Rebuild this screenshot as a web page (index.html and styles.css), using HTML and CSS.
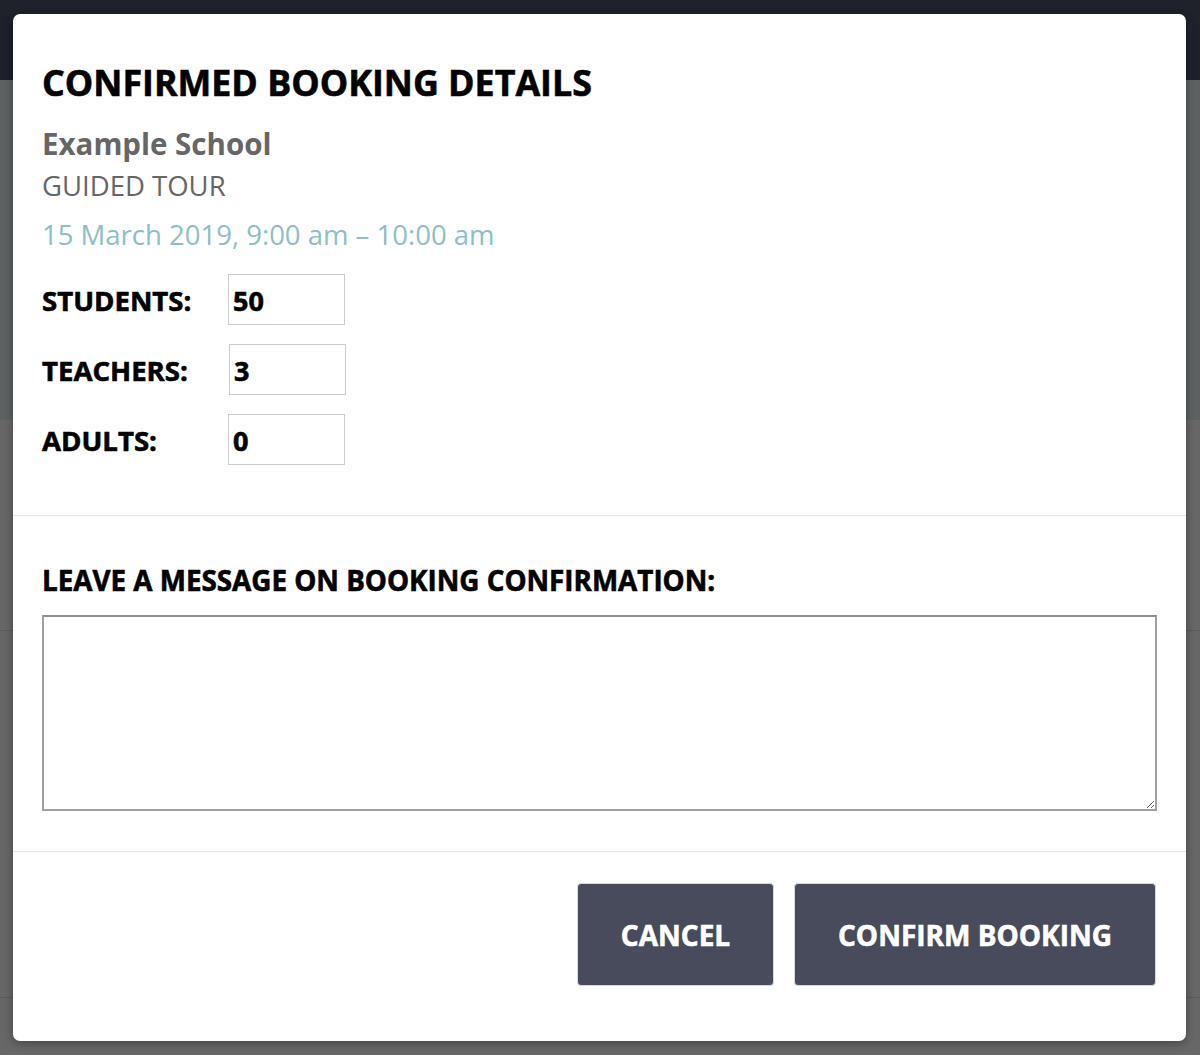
FILE: index.html
```html
<!DOCTYPE html>
<html>
<head>
  <link rel="stylesheet" href="styles.css">
  <title>Confirmed Booking Details</title>
</head>
<body>
  <div class="page">
    <div class="topbar"></div>
    <div class="band band-one"></div>
    <div class="band band-two"></div>
    <div class="band band-three"></div>
    <div class="band band-four"></div>
  </div>

  <div class="modal">
    <div class="modal-body">
      <h2 class="modal-title">Confirmed Booking Details</h2>
      <div class="school">Example School</div>
      <div class="tour">Guided Tour</div>
      <div class="when">15 March 2019, 9:00 am – 10:00 am</div>

      <div class="counts">
        <label for="students">Students:</label>
        <input type="text" id="students" value="50">
        <label for="teachers">Teachers:</label>
        <input type="text" id="teachers" value="3" class="nudge">
        <label for="adults">Adults:</label>
        <input type="text" id="adults" value="0">
      </div>
    </div>

    <div class="modal-message">
      <label for="message" class="message-label">Leave a message on booking confirmation:</label>
      <textarea id="message"></textarea>
    </div>

    <div class="modal-footer">
      <button type="button" class="btn btn-cancel">Cancel</button>
      <button type="button" class="btn btn-confirm">Confirm Booking</button>
    </div>
  </div>
</body>
</html>
```

FILE: styles.css
```css
:root{
--dark: #1f222b;
--overlay1: #5e6163;
--overlay2: #676767;
--line: #e6e6e6;
--btn: #474b5c;
--muted: #666666;
--teal: #8cc0c7;
}

body {
	margin: 0;
	font-family: "Open Sans", sans-serif;
	background-color: var(--overlay2);
	height: 1055px;
	overflow: hidden;
}

.page {
	display: flex;
	flex-direction: column;
}

.topbar {
	height: 80px;
	background-color: var(--dark);
}

.band-one {
	height: 340px;
	background-color: var(--overlay1);
}

.band-two {
	height: 210px;
	border-bottom: 1px solid #5a5c5c;
}

.band-three {
	height: 366px;
	border-bottom: 1px solid #5a5c5c;
}

.modal {
	position: absolute;
	top: 14px;
	left: 13px;
	width: 1173px;
	height: 1027px;
	background: white;
	border-radius: 7px;
	box-shadow: 0 2px 10px rgba(0,0,0,0.35);
	display: flex;
	flex-direction: column;
}

/* heavier look, the installed Open Sans stops at bold */
.modal-title,
.counts label,
.counts input,
.message-label,
.btn {
	font-weight: 700;
	-webkit-text-stroke: 0.6px currentColor;
}

.modal-body {
	padding: 44px 29px 50px 29px;
	border-bottom: 1px solid var(--line);
}

.modal-title {
	margin: 0;
	font-size: 35.8px;
	text-transform: uppercase;
	color: black;
	line-height: 48px;
}

.school {
	margin-top: 18px;
	font-size: 29.5px;
	font-weight: 700;
	color: var(--muted);
	line-height: 40px;
}

.tour {
	font-size: 27.5px;
	color: var(--muted);
	text-transform: uppercase;
	line-height: 40px;
	margin-top: 2px;
}

.when {
	font-size: 27.5px;
	color: var(--teal);
	line-height: 40px;
	margin-top: 9px;
}

.counts {
	margin-top: 19px;
	display: grid;
	grid-template-columns: 186px 117px;
	row-gap: 19px;
	align-items: center;
}

.counts label {
	font-size: 27.6px;
	text-transform: uppercase;
	color: black;
}

.counts input {
	box-sizing: border-box;
	width: 117px;
	height: 51px;
	border: 1px solid #cccccc;
	padding: 2px 4px 0 4px;
	font-family: "Open Sans", sans-serif;
	font-size: 27px;
	color: black;
}

.counts .nudge {
	margin-left: 1px;
}

.modal-message {
	padding: 44px 29px 40px 29px;
	border-bottom: 1px solid var(--line);
	display: flex;
	flex-direction: column;
}

.message-label {
	font-size: 27.8px;
	text-transform: uppercase;
	color: black;
	line-height: 40px;
}

textarea {
	margin-top: 15px;
	box-sizing: border-box;
	height: 196px;
	border: 2px solid #a0a0a0;
	border-top-color: #8e8e8e;
	font-family: "Open Sans", sans-serif;
	font-size: 20px;
}

.modal-footer {
	display: flex;
	justify-content: flex-end;
	gap: 20px;
	padding: 31px 30px 0 30px;
}

.btn {
	box-sizing: border-box;
	height: 103px;
	background: var(--btn);
	color: white;
	border: 1px solid #d8d9dd;
	border-radius: 4px;
	font-family: "Open Sans", sans-serif;
	font-size: 28px;
	text-transform: uppercase;
}

.btn-cancel {
	width: 197px;
}

.btn-confirm {
	width: 362px;
}
```
